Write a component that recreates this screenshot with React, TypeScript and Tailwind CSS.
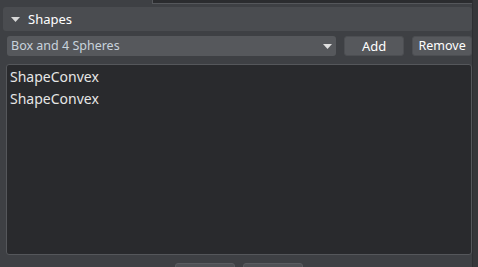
import { useState } from "react"

const Caret = () => (
  <svg width="9" height="5" viewBox="0 0 9 5" className="shrink-0">
    <path d="M0 0 H9 L4.5 5 Z" fill="currentColor" />
  </svg>
)

const App = () => {
  const [preset] = useState("Box and 4 Spheres")
  const shapes = ["ShapeConvex", "ShapeConvex"]

  return (
    <div
      className="w-[478px] h-[267px] overflow-hidden bg-[#3e4044] flex text-[13px]"
      style={{ fontFamily: '"Noto Sans", "DejaVu Sans", sans-serif' }}
    >
      <div className="flex-1 flex flex-col min-w-0">
        {/* bottom edge of the panel above */}
        <div className="h-[5px] flex shrink-0">
          <div className="w-[152px]" />
          <div className="flex-1 bg-[#2b2c2f] border-b border-l border-[#55575b] h-[4px]" />
        </div>

        <div className="pl-[3px] pt-[2px]">
          <div className="h-[24px] bg-[#4a4c50] rounded-[3px] flex items-center pl-[8px] gap-[8px] text-white">
            <span className="text-[#d8d8d8]"><Caret /></span>
            <span className="text-[13px] leading-none">Shapes</span>
          </div>
        </div>

        <div className="flex items-center pl-[7px] pt-[5px] gap-[8px]">
          <div className="w-[330px] h-[20px] bg-[#56585c] rounded-[3px] flex items-center justify-between pl-[4px] pr-[4px] text-[#c9d3dc] text-[12.5px]">
            <span className="leading-none">{preset}</span>
            <span className="text-[#e0e0e0]"><Caret /></span>
          </div>
          <div className="w-[60px] h-[20px] bg-[#56585c] rounded-[3px] border border-[#4c4e52] flex items-center justify-center text-white text-[13px] leading-none">
            Add
          </div>
          <div className="w-[60px] h-[20px] bg-[#56585c] rounded-[3px] border border-[#4c4e52] flex items-center justify-center text-white text-[12.5px] leading-none">
            Remove
          </div>
        </div>

        <div className="pl-[6px] pt-[8px]">
          <div className="h-[191px] bg-[#292a2d] border border-[#55575b] rounded-[3px] pl-[3px] flex flex-col">
            {shapes.map((s, i) => (
              <div key={i} className="h-[22px] flex items-center text-[#e6e6e6] text-[14px]">
                {s}
              </div>
            ))}
          </div>
        </div>

        <div className="flex justify-center gap-[8px] pt-[8px] pl-[6px]">
          <div className="w-[60px] h-[10px] bg-[#4f5155] border border-[#5a5c60] rounded-[3px]" />
          <div className="w-[60px] h-[10px] bg-[#4f5155] border border-[#5a5c60] rounded-[3px]" />
        </div>
      </div>

      <div className="w-[6px] bg-[#36373a] border-l border-[#2e2f32] shrink-0" />
    </div>
  )
}

export default App
